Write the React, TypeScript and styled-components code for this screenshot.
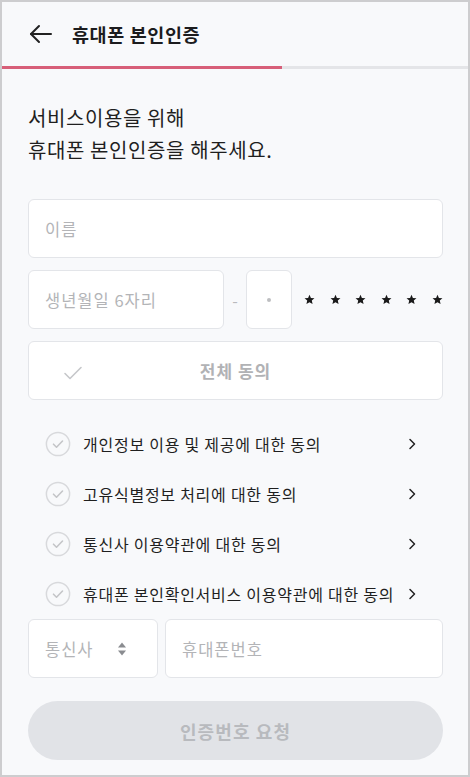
import * as React from 'react';
import styled, { createGlobalStyle } from 'styled-components';

const GlobalStyle = createGlobalStyle`
  html, body {
    margin: 0;
    padding: 0;
    background: #f8f9fb;
  }
  * {
    box-sizing: border-box;
  }
  body {
    font-family: "Noto Sans CJK KR", "Noto Sans", sans-serif;
    color: #222;
  }
`;

const agreements = [
  '개인정보 이용 및 제공에 대한 동의',
  '고유식별정보 처리에 대한 동의',
  '통신사 이용약관에 대한 동의',
  '휴대폰 본인확인서비스 이용약관에 대한 동의',
];

const BackArrow = () => (
  <svg width="24" height="20" viewBox="0 0 24 20" fill="none" stroke="#222" strokeWidth="2" strokeLinecap="round" strokeLinejoin="round">
    <path d="M2 10h20" />
    <path d="M10 2L2 10l8 8" />
  </svg>
);

const Check = ({ color }: { color: string }) => (
  <svg width="20" height="16" viewBox="0 0 20 16" fill="none" stroke={color} strokeWidth="1.6" strokeLinecap="round" strokeLinejoin="round">
    <path d="M2 8.5l5 5L18 2.5" />
  </svg>
);

const CircleCheck = () => (
  <svg width="26" height="26" viewBox="0 0 26 26" fill="none">
    <circle cx="13" cy="13" r="11.6" stroke="#d8d9dc" strokeWidth="1.5" />
    <path d="M8.5 13.2l3 3 6-6.2" stroke="#c4c5c8" strokeWidth="1.6" strokeLinecap="round" strokeLinejoin="round" />
  </svg>
);

const Chevron = () => (
  <svg width="10" height="14" viewBox="0 0 10 14" fill="none" stroke="#222" strokeWidth="1.5" strokeLinecap="round" strokeLinejoin="round">
    <path d="M3 2.5l4.5 4.5L3 11.5" />
  </svg>
);

const SortArrows = () => (
  <svg width="10" height="16" viewBox="0 0 10 16" fill="#8a8c90">
    <path d="M5 1.5L9 6.5H1z" />
    <path d="M5 14.5L1 9.5h8z" />
  </svg>
);

const Star = () => (
  <svg width="11" height="11" viewBox="0 0 24 24" fill="#1a1a1a">
    <path d="M12 1.5l3.1 7.1 7.7.7-5.8 5.1 1.7 7.6L12 18l-6.7 4 1.7-7.6-5.8-5.1 7.7-.7z" />
  </svg>
);

const App = () => {
  return (
    <Frame>
      <GlobalStyle />
      <Header.Bar>
        <Header.Back>
          <BackArrow />
        </Header.Back>
        <Header.Title>휴대폰 본인인증</Header.Title>
      </Header.Bar>
      <Progress.Track>
        <Progress.Fill $percent={60} />
      </Progress.Track>

      <Body>
        <Lead>
          서비스이용을 위해
          <br />
          휴대폰 본인인증을 해주세요.
        </Lead>

        <Field.Box>
          <Field.Placeholder>이름</Field.Placeholder>
        </Field.Box>

        <Birth.Row>
          <Field.Box $width="196px">
            <Field.Placeholder>생년월일 6자리</Field.Placeholder>
          </Field.Box>
          <Birth.Dash>-</Birth.Dash>
          <Birth.Digit>
            <Birth.Dot />
          </Birth.Digit>
          <Birth.Stars>
            {Array.from({ length: 6 }).map((_, i) => (
              <Star key={i} />
            ))}
          </Birth.Stars>
        </Birth.Row>

        <AllAgree.Box>
          <AllAgree.Icon>
            <Check color="#c6c7ca" />
          </AllAgree.Icon>
          <AllAgree.Label>전체 동의</AllAgree.Label>
        </AllAgree.Box>

        <Terms.List>
          {agreements.map((text) => (
            <Terms.Row key={text}>
              <CircleCheck />
              <Terms.Text>{text}</Terms.Text>
              <Chevron />
            </Terms.Row>
          ))}
        </Terms.List>

        <Phone.Row>
          <Phone.Carrier>
            <Field.Placeholder>통신사</Field.Placeholder>
            <SortArrows />
          </Phone.Carrier>
          <Field.Box $grow>
            <Field.Placeholder>휴대폰번호</Field.Placeholder>
          </Field.Box>
        </Phone.Row>

        <Submit disabled>인증번호 요청</Submit>
      </Body>
    </Frame>
  );
};

export default App;

const Frame = styled.div`
  width: 470px;
  height: 777px;
  border: 2px solid #cdcdcf;
  background: #f8f9fb;
  overflow: hidden;
`;

const Header = {
  Bar: styled.div`
    height: 64px;
    display: flex;
    align-items: center;
    padding-left: 27px;
  `,

  Back: styled.div`
    width: 26px;
    display: flex;
    align-items: center;
    margin-right: 17px;
  `,

  Title: styled.h1`
    margin: 0;
    font-size: 18.5px;
    font-weight: 700;
    color: #1c1c1e;
    letter-spacing: 0.6px;
  `,
};

const Progress = {
  Track: styled.div`
    height: 3px;
    background: #e4e5e8;
  `,

  Fill: styled.div<{ $percent: number }>`
    height: 100%;
    width: ${(p) => p.$percent}%;
    background: #d75f79;
  `,
};

const Body = styled.div`
  padding: 33px 25px 0 26px;
  display: flex;
  flex-direction: column;
`;

const Lead = styled.p`
  margin: 0 0 33px;
  font-size: 20px;
  line-height: 32px;
  color: #1f1f1f;
  letter-spacing: 0.6px;
`;

const Field = {
  Box: styled.div<{ $width?: string; $grow?: boolean }>`
    height: 59px;
    width: ${(p) => p.$width || 'auto'};
    flex: ${(p) => (p.$grow ? '1' : 'none')};
    background: #fff;
    border: 1px solid #e3e5e9;
    border-radius: 6px;
    display: flex;
    align-items: center;
    padding: 0 16px;
  `,

  Placeholder: styled.span`
    font-size: 16.5px;
    letter-spacing: 1px;
    color: #b3b4b7;
  `,
};

const Birth = {
  Row: styled.div`
    display: flex;
    align-items: center;
    margin-top: 12px;
  `,

  Dash: styled.span`
    width: 22px;
    text-align: center;
    font-size: 16px;
    color: #b9babd;
  `,

  Digit: styled.div`
    width: 46px;
    height: 59px;
    background: #fff;
    border: 1px solid #e3e5e9;
    border-radius: 6px;
    display: flex;
    align-items: center;
    justify-content: center;
  `,

  Dot: styled.span`
    width: 4px;
    height: 4px;
    border-radius: 50%;
    background: #bdbec1;
  `,

  Stars: styled.div`
    display: flex;
    align-items: center;
    gap: 14.6px;
    margin-left: 12px;
  `,
};

const AllAgree = {
  Box: styled.div`
    margin-top: 12px;
    height: 59px;
    background: #fff;
    border: 1px solid #e3e5e9;
    border-radius: 6px;
    display: flex;
    align-items: center;
    position: relative;
  `,

  Icon: styled.div`
    position: absolute;
    left: 34px;
    top: 20px;
  `,

  Label: styled.span`
    flex: 1;
    text-align: center;
    font-size: 17px;
    font-weight: 700;
    letter-spacing: 1px;
    color: #b1b2b5;
  `,
};

const Terms = {
  List: styled.div`
    margin-top: 19px;
    display: flex;
    flex-direction: column;
  `,

  Row: styled.div`
    height: 50px;
    display: flex;
    align-items: center;
    padding: 0 26px 0 17px;
  `,

  Text: styled.span`
    flex: 1;
    margin-left: 12px;
    font-size: 16px;
    letter-spacing: 0.75px;
    color: #1f1f1f;
    white-space: nowrap;
  `,
};

const Phone = {
  Row: styled.div`
    display: flex;
    gap: 7px;
  `,

  Carrier: styled.div`
    width: 130px;
    height: 59px;
    background: #fff;
    border: 1px solid #e3e5e9;
    border-radius: 6px;
    display: flex;
    align-items: center;
    justify-content: space-between;
    padding: 0 30px 0 16px;
  `,
};

const Submit = styled.button`
  margin-top: 23px;
  height: 59px;
  border: none;
  border-radius: 30px;
  background: #e1e3e7;
  font-family: inherit;
  font-size: 18px;
  font-weight: 700;
  letter-spacing: 1.1px;
  color: #b8babe;
`;
